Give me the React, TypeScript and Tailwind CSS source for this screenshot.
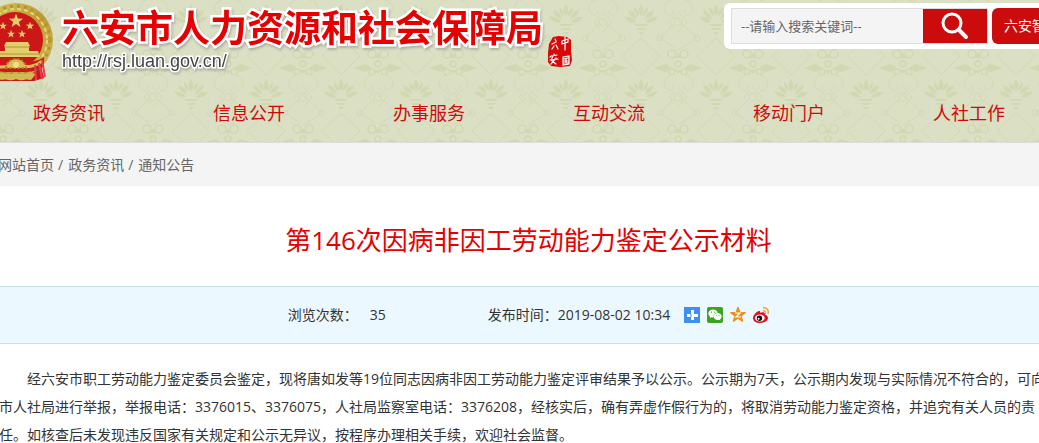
import { FaWeixin } from "react-icons/fa6";

const navLinks = [
  { href: "#zwzx", label: "政务资讯" },
  { href: "#xxgk", label: "信息公开" },
  { href: "#bsfw", label: "办事服务" },
  { href: "#hdjl", label: "互动交流" },
  { href: "#ydmh", label: "移动门户" },
  { href: "#rsgz", label: "人社工作" },
];

const crumbs = [
  { href: "#home", label: "网站首页" },
  { href: "#zwzx", label: "政务资讯" },
  { href: "#tzgg", label: "通知公告" },
];

const STAR = "M0-10 2.4-3.2 9.5-3.1 3.8 1.2 5.9 8.1 0 4-5.9 8.1-3.8 1.2-9.5-3.1-2.4-3.2Z";

function HeaderPattern() {
  return (
    <svg className="absolute inset-0 h-full w-full" aria-hidden="true">
      <defs>
        <pattern id="damask" width="75" height="75" patternUnits="userSpaceOnUse">
          <g fill="none" stroke="#d2d8b4" strokeWidth="1">
            <path d="M3 20 22 38 3 50M78 20 60 38 78 50M41 38 22 56 41 75M41 38 60 56 41 75" />
            <path d="M3 12 12 22 3 32M78 12 69 22 78 32" />
            <circle cx="3" cy="22" r="4" />
            <circle cx="78" cy="22" r="4" />
            <circle cx="22" cy="38" r="3" />
            <circle cx="60" cy="38" r="3" />
            <path d="M10 0c8 2 10 8 6 13s-9 1-6-3M72 0c-8 2-10 8-6 13s9 1 6-3" />
          </g>
          {/* fan of leaves */}
          <g transform="translate(41 20)" fill="#d1d7b1">
            <path d="M0-4C-3-7-3-12 0-16 3-12 3-7 0-4Z" />
            <path d="M-2-4C-5-5-7-8-7-13-4-11-2-8-2-4ZM2-4C5-5 7-8 7-13 4-11 2-8 2-4Z" />
            <path d="M-4-1C-9-2-12-5-13-10-8-9-5-6-4-1ZM4-1C9-2 12-5 13-10 8-9 5-6 4-1Z" />
            <path d="M-5 2C-10 4-14 1-17-3-12-4-7-2-5 2ZM5 2C10 4 14 1 17-3 12-4 7-2 5 2Z" />
            <path d="M-7 4H7L5 6H-5ZM-5 8H5L3 10H-3ZM-3 12H3L0 15Z" />
          </g>
          {/* lace flower, split over the tile edge */}
          {[3, 78].map((x) => (
            <g key={x} transform={`translate(${x} 64)`}>
              <g fill="none" stroke="#d1d7b1" strokeWidth="1.500">
                <circle cx="-6" cy="-10" r="4" />
                <circle cx="6" cy="-10" r="4" />
                <circle cx="-6" cy="8" r="3" />
                <circle cx="6" cy="8" r="3" />
                <circle r="3" />
              </g>
              <path
                d="M-6 4-12 0-16 1-24 4-16 7-12 8ZM6 4 12 0 16 1 24 4 16 7 12 8ZM-3-6 0-11 3-6ZM-3 6 0 10 3 6Z"
                fill="#d1d7b1"
              />
            </g>
          ))}
        </pattern>
      </defs>
      <rect width="100%" height="100%" fill="url(#damask)" />
    </svg>
  );
}

function Emblem() {
  return (
    <svg viewBox="0 0 78 82" className="-ml-6 h-[82px] w-[78px] shrink-0" aria-hidden="true">
      <defs>
        <linearGradient id="gold" x1="0" y1="0" x2="1" y2="1">
          <stop offset="0" stopColor="#dcc862" />
          <stop offset="0.5" stopColor="#bd9c34" />
          <stop offset="1" stopColor="#d3bb52" />
        </linearGradient>
      </defs>
      <path d="M18 60 11 78 20 81 58 81 68 78 63 58Z" fill="#c8141a" />
      <circle cx="40" cy="40" r="37" fill="url(#gold)" />
      <circle cx="40" cy="40" r="34" fill="none" stroke="#b39432" strokeWidth="3" strokeDasharray="3 4" />
      <circle cx="40" cy="40" r="31" fill="none" stroke="#e6d67c" strokeWidth="2" strokeDasharray="4 3" />
      <circle cx="39" cy="40" r="28" fill="#cb1717" />
      <g fill="#e2cf6c">
        <path d={STAR} transform="translate(40 21) scale(.75)" />
        <path d={STAR} transform="translate(27 26) scale(.42)" />
        <path d={STAR} transform="translate(54 26) scale(.44)" />
        <path d={STAR} transform="translate(35 34) scale(.42)" />
        <path d={STAR} transform="translate(46 34) scale(.42)" />
        <path d="M30 42h22l2 4H28ZM29 46h24v5H29ZM20 51h42l2 6H18Z" />
      </g>
      <path d="M28 47h26M20 54h43" stroke="#b39432" />
      <path d="M12 57c10 7 18 3 28 3s19 4 28-3v9c-9 7-17 6-28 6s-19 1-28-6Z" fill="#cf181b" />
      <path d="M14 65c9 4 19 1 26 1s17 3 26-5" fill="none" stroke="#d9c158" strokeWidth="3" />
      <path d="M30 68a10 9 0 0 1 20 0Z" fill="#d9bf50" stroke="#a98928" strokeWidth="2" strokeDasharray="2 2" />
      <circle cx="40" cy="65" r="3" fill="#f0df86" />
      <path d="M18 74c8-3 14 2 22-1 8 3 14-2 20 1l-5 6c-6-2-10 2-15-1-5 3-9-1-15 1Z" fill="#d3bb52" />
      <path d="M59 65 60 80M63 63l3 16M66 60l3 17" stroke="#e2404c" strokeWidth="2" />
    </svg>
  );
}

function Seal() {
  return (
    <svg viewBox="0 0 25 31" className="mt-9 ml-1 h-[31px] w-[25px] shrink-0" aria-hidden="true">
      <path d="M6 1 12 0l8 1 4 3v11l1 9-2 6-10 1-9-1-3-4 0-9 1-9Z" fill="#d90808" />
      <g fill="none" stroke="#fff" strokeWidth="1.2" strokeLinecap="round">
        <path d="M8 3 9 5M5 8l4-2M5 13l2-3M9 9l2 4" />
        <path d="M15 5v3l6-2V3l-6 2M18 1v13" />
        <path d="M7 18v1M3 21l1-1 6-1M6 20 4 24l5 4M9 22l-5 6M3 24l8-1" />
        <path d="M16 21l6-1v8l-6 1ZM17 23l4-1M19 22v5M17 25h4M17 27h4" />
      </g>
    </svg>
  );
}

function SearchIcon() {
  return (
    <svg viewBox="0 0 28 28" className="h-7 w-7" fill="none" stroke="#fff" aria-hidden="true">
      <circle cx="11" cy="11" r="9" strokeWidth="3" />
      <path d="M18 18l7 7" strokeWidth="4" strokeLinecap="round" />
    </svg>
  );
}

function ShareLinks() {
  return (
    <div className="flex gap-[7px]">
      <a href="#share" aria-label="分享" className="h-4 w-4 bg-[#3f8fec]">
        <svg viewBox="0 0 16 16" className="h-4 w-4">
          <path d="M7 3h3v4h4v3h-4v3H7v-3H3V7h4Z" fill="#fff" />
          <path d="M6 7h1v3" stroke="#3f8fec" fill="none" />
        </svg>
      </a>
      <a
        href="#weixin"
        aria-label="微信"
        className="flex h-4 w-4 items-center justify-center rounded-xs bg-[#3aa51c] text-white"
      >
        <FaWeixin className="h-[14px] w-[14px]" />
      </a>
      <a href="#qzone" aria-label="QQ空间" className="h-4 w-4">
        <svg viewBox="0 0 16 16" className="h-4 w-4">
          <path
            d={STAR}
            transform="translate(8 8) scale(.75)"
            fill="#e8921d"
            stroke="#e8921d"
            strokeWidth="2"
            strokeLinejoin="round"
          />
          <path d="M5 6h5L6 10h5" fill="none" stroke="#fff" strokeWidth="1.2" />
        </svg>
      </a>
      <a href="#weibo" aria-label="新浪微博" className="h-4 w-4">
        <svg viewBox="0 0 16 16" className="h-4 w-4">
          <path
            d="M6 4c1 0 2 1 1 2 2-1 5-1 5 1 0 1 3 1 3 4 0 3-4 5-8 5-4 0-7-2-7-5S4 4 6 4Z"
            fill="#dd1220"
          />
          <ellipse cx="6.8" cy="11" rx="4.9" ry="3.5" fill="#fff" />
          <circle cx="6.5" cy="11.2" r="2.7" fill="#111" />
          <circle cx="5.6" cy="11.8" r="1" fill="#fff" />
          <path d="M10 1c4-1 6 3 5 6M10 4c2-1 3 1 2 3" fill="none" stroke="#eda33b" strokeWidth="1.5" />
        </svg>
      </a>
    </div>
  );
}

export default function App() {
  return (
    <div className="min-h-screen overflow-x-clip bg-white font-['Open_Sans','Noto_Sans_CJK_SC',sans-serif] text-sm text-[#333]">
      <header className="relative overflow-hidden border-b border-[#dcdcdc] bg-[#dbdfc4]">
        <HeaderPattern />
        <div className="relative flex h-24 items-start">
          <Emblem />
          <div className="ml-2 shrink-0 pt-[3px] whitespace-nowrap">
            <h1 className="text-[37px] leading-[50px] font-bold text-[#e60000] [-webkit-text-stroke:5px_white] [paint-order:stroke_fill] drop-shadow-[1px_2px_1px_#8888]">
              六安市人力资源和社会保障局
            </h1>
            <p className="-mt-1 font-['Liberation_Sans',sans-serif] text-lg leading-6 text-[#444] [-webkit-text-stroke:3px_white] [paint-order:stroke_fill] drop-shadow-[1px_2px_1px_#8888]">
              http://rsj.luan.gov.cn/
            </p>
          </div>
          <Seal />

          <form
            className="mt-[3px] ml-auto flex h-[46px] shrink-0 items-center rounded-l-md bg-white pl-[7px]"
            onSubmit={(e) => e.preventDefault()}
          >
            <div className="flex h-9 border border-[#ddd]">
              <input
                type="text"
                aria-label="搜索关键词"
                placeholder="--请输入搜索关键词--"
                className="w-[191px] bg-[#f4f4f4] pl-[9px] text-[13px] outline-none placeholder:text-[#666]"
              />
              <button
                type="submit"
                aria-label="搜索"
                className="flex w-16 items-center justify-center bg-[#cc0c0c]"
              >
                <SearchIcon />
              </button>
            </div>
            <button
              type="button"
              className="ml-1 h-9 w-[47px] overflow-hidden rounded-l-md bg-[#cc0c0c] pl-3 text-left whitespace-nowrap text-white"
            >
              六安智
            </button>
          </form>
        </div>

        <nav className="relative pb-3 pl-7">
          <ul className="flex">
            {navLinks.map((link) => (
              <li key={link.label} className="w-[180px] shrink-0 border-l border-[#d8dcd0] pl-1">
                <a href={link.href} className="text-lg leading-[34px] text-[#cc0c0c]">
                  {link.label}
                </a>
              </li>
            ))}
          </ul>
        </nav>
      </header>

      <div className="bg-[#f4f4f4]">
        <ol className="-ml-0.5 flex gap-1 leading-[43px] text-[#666]">
          {crumbs.map((crumb, i) => (
            <li key={crumb.label} className="flex gap-[5px]">
              {i > 0 && <span>/</span>}
              <a href={crumb.href}>{crumb.label}</a>
            </li>
          ))}
        </ol>
      </div>

      <main className="-mr-[18px]">
        <h2 className="pt-[34px] pb-[26px] text-center text-[26px] leading-10 text-[#e60000]">
          第146次因病非因工劳动能力鉴定公示材料
        </h2>
        <div className="flex items-center justify-center border-y border-[#c9dfea] bg-[#ecf8ff] leading-14">
          <span>浏览次数：</span>
          <span className="ml-3">35</span>
          <span className="ml-[102px]">发布时间：2019-08-02 10:34</span>
          <div className="ml-[14px]">
            <ShareLinks />
          </div>
        </div>
        <p className="-ml-px pt-[21px] pr-[10px] indent-7 leading-7">
          经六安市职工劳动能力鉴定委员会鉴定，现将唐如发等19位同志因病非因工劳动能力鉴定评审结果予以公示。公示期为7天，公示期内发现与实际情况不符合的，可向市人社局进行举报，举报电话：3376015、3376075，人社局监察室电话：3376208，经核实后，确有弄虚作假行为的，将取消劳动能力鉴定资格，并追究有关人员的责任。如核查后未发现违反国家有关规定和公示无异议，按程序办理相关手续，欢迎社会监督。
        </p>
      </main>
    </div>
  );
}
